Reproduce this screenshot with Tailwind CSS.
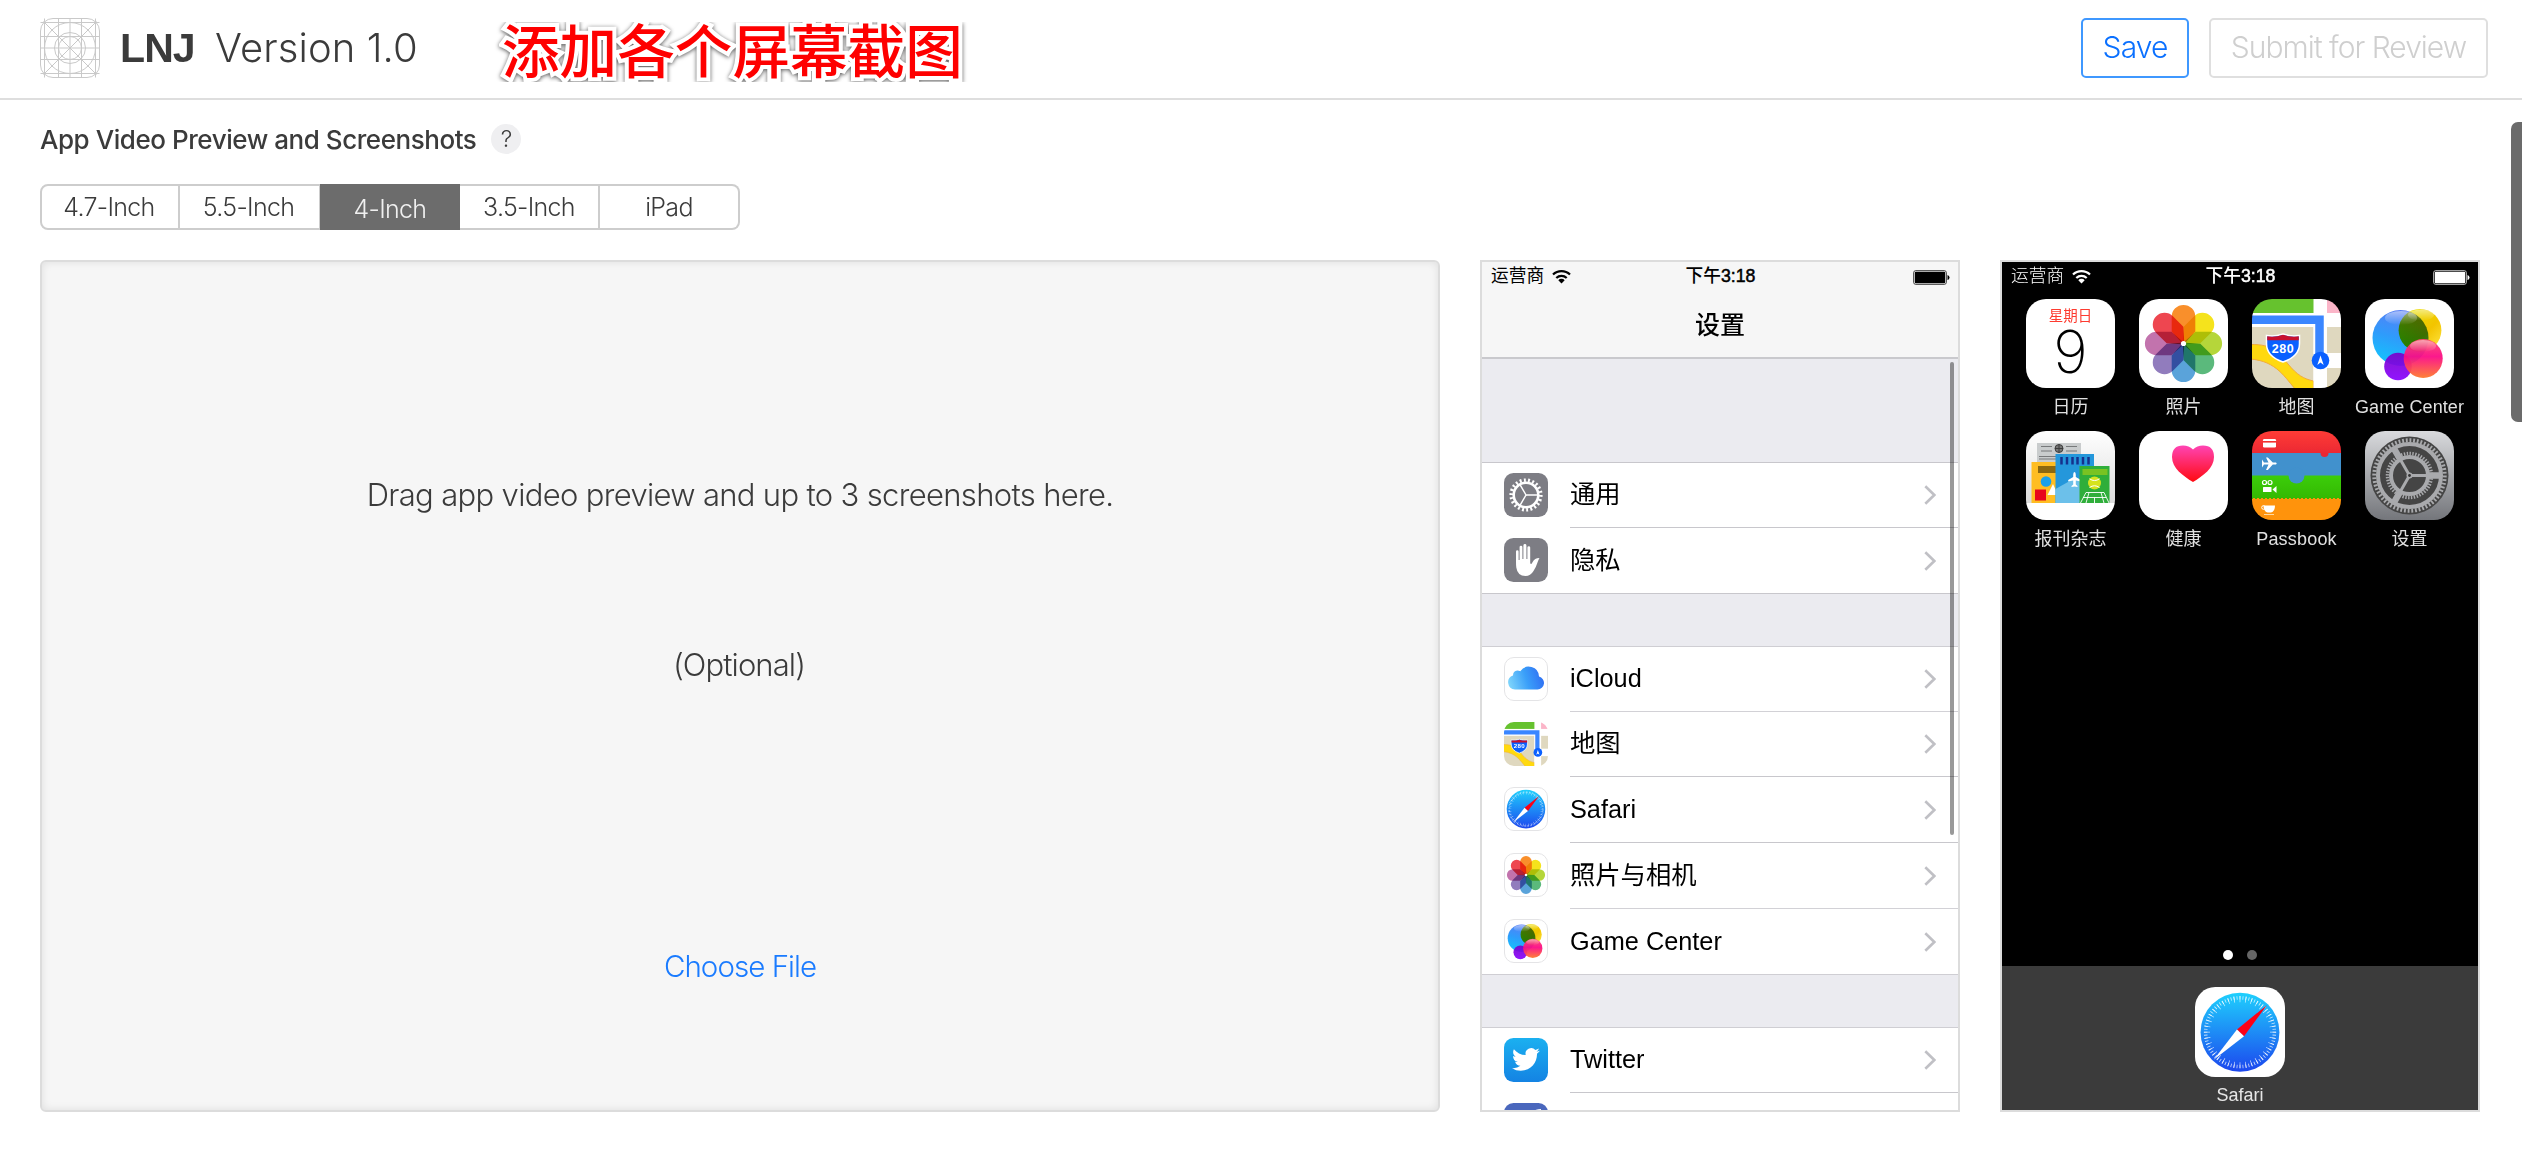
<!DOCTYPE html>
<html lang="en">
<head>
<meta charset="utf-8">
<title>LNJ Version 1.0</title>
<script src="https://cdn.jsdelivr.net/npm/@tailwindcss/browser@4"></script>
</head>
<body class="flex h-[1168px] flex-col overflow-hidden bg-white font-['Inter','Noto_Sans_CJK_SC',sans-serif] font-light text-[#3b3b3b]">

<!-- Shared artwork -->
<svg class="absolute h-0 w-0">
  <defs>
    <linearGradient id="gSafari" x1="0" y1="0" x2="0" y2="1"><stop offset="0" stop-color="#1fd0fd"/><stop offset="1" stop-color="#1c47ee"/></linearGradient>
    <linearGradient id="gBlue" x1="0.6" y1="0" x2="0.3" y2="1"><stop offset="0" stop-color="#5b7cf5"/><stop offset=".5" stop-color="#2f9bfb"/><stop offset="1" stop-color="#12c6fd"/></linearGradient>
    <linearGradient id="gYellow" x1="0" y1="0" x2="1" y2="1"><stop offset="0" stop-color="#e6e800"/><stop offset=".6" stop-color="#f3c400"/><stop offset="1" stop-color="#ffe94a"/></linearGradient>
    <linearGradient id="gPink" x1="0" y1="0" x2="0" y2="1"><stop offset="0" stop-color="#ff4a6a"/><stop offset=".45" stop-color="#fb0a86"/><stop offset="1" stop-color="#ff7a2a"/></linearGradient>
    <linearGradient id="gPurple" x1="0" y1="0" x2="0" y2="1"><stop offset="0" stop-color="#7a00c8"/><stop offset="1" stop-color="#8800ff"/></linearGradient>
    <linearGradient id="gShine" x1="0" y1="0" x2="0" y2="1"><stop offset="0" stop-color="#fff" stop-opacity=".5"/><stop offset="1" stop-color="#fff" stop-opacity="0"/></linearGradient>
    <linearGradient id="gHeart" x1="0" y1="0" x2="0" y2="1"><stop offset="0" stop-color="#ff44b4"/><stop offset="1" stop-color="#ff0a10"/></linearGradient>
    <linearGradient id="gGear" x1="0" y1="0" x2="0" y2="1"><stop offset="0" stop-color="#d9dadd"/><stop offset="1" stop-color="#74767b"/></linearGradient>
    <linearGradient id="gRed" x1="0" y1="0" x2="0" y2="1"><stop offset="0" stop-color="#ff3c36"/><stop offset="1" stop-color="#ea2733"/></linearGradient>
    <linearGradient id="gGreen" x1="0" y1="0" x2="0" y2="1"><stop offset="0" stop-color="#3ccd0a"/><stop offset="1" stop-color="#33b802"/></linearGradient>
    <linearGradient id="gCloud" x1="0" y1=".6" x2="1" y2=".4"><stop offset="0" stop-color="#7cd3fb"/><stop offset=".5" stop-color="#3a9ff9"/><stop offset="1" stop-color="#2f6df3"/></linearGradient>
    <linearGradient id="gTw" x1="0" y1="0" x2="0" y2="1"><stop offset="0" stop-color="#1bb0f0"/><stop offset="1" stop-color="#1483e3"/></linearGradient>
    <linearGradient id="gNews" x1="0" y1="0" x2="0" y2="1"><stop offset="0" stop-color="#ffffff"/><stop offset="1" stop-color="#dcdcdc"/></linearGradient>
    <clipPath id="tile"><rect width="89" height="89" rx="20"/></clipPath>
    <path id="petal" d="M32.700 17.700a11.800 11.800 0 0 1 23.600 0V32.500L46.500 43.500H42.500L32.700 32.500Z"/>

    <symbol id="photos" viewBox="0 0 89 89">
      <rect width="89" height="89" rx="20" fill="#fff"/>
      <g class="isolate">
        <g class="mix-blend-multiply"><use href="#petal" fill="#f98f2b"/></g>
        <g class="mix-blend-multiply"><use href="#petal" fill="#f5e31c" transform="rotate(45 44.500 44.500)"/></g>
        <g class="mix-blend-multiply"><use href="#petal" fill="#b5d63a" transform="rotate(90 44.500 44.500)"/></g>
        <g class="mix-blend-multiply"><use href="#petal" fill="#5bb97c" transform="rotate(135 44.500 44.500)"/></g>
        <g class="mix-blend-multiply"><use href="#petal" fill="#5aa3da" transform="rotate(180 44.500 44.500)"/></g>
        <g class="mix-blend-multiply"><use href="#petal" fill="#917cbd" transform="rotate(225 44.500 44.500)"/></g>
        <g class="mix-blend-multiply"><use href="#petal" fill="#c273ad" transform="rotate(270 44.500 44.500)"/></g>
        <g class="mix-blend-multiply"><use href="#petal" fill="#ee4650" transform="rotate(315 44.500 44.500)"/></g>
      </g>
      <circle cx="44.500" cy="44.500" r="2.600" fill="#fff"/>
    </symbol>

    <symbol id="map" viewBox="0 0 89 89">
      <g clip-path="url(#tile)">
        <rect width="89" height="89" fill="#fff"/>
        <rect width="61.500" height="14" fill="#66c22e"/>
        <rect x="75" width="14" height="14" fill="#fbb5c8"/>
        <rect y="28" width="61.500" height="61" fill="#dfd8bf"/>
        <rect x="75" y="28" width="14" height="26" fill="#dfd8bf"/>
        <rect x="75" y="69" width="14" height="20" fill="#dfd8bf"/>
        <path d="M-2 45.500C22 45 27 54 36 65C45 76 52 80 61.500 82V92H45C33 79 25 62-2 60Z" fill="#ffd90f" stroke="#f3ab3a" stroke-width="1"/>
        <path d="M75 88Q82 86 89 83V89H75Z" fill="#ffcf0f"/>
        <rect x="61.500" y="26" width="13.500" height="63" fill="#fff"/>
        <path d="M0 20.800H67.500V58" fill="none" stroke="#3a86ff" stroke-width="8.500"/>
        <circle cx="68.500" cy="61.500" r="8.800" fill="#0a60ff"/>
        <path d="M68.500 56.500l3.200 9.500-3.200-2.500-3.200 2.500z" fill="#fff"/>
        <path d="M14.500 36.500q8 1.500 16.500-1.500q8.500 3 16.500 1.500v8q0 13-16.500 18.500q-16.500-5.500-16.500-18.500z" fill="#0a60ff" stroke="#fff" stroke-width="1.500"/>
        <path d="M15.200 37.300q8 1.200 15.800-1.500q8 2.700 15.800 1.500v4h-31.600z" fill="#c8102e"/>
        <text x="31" y="53.500" text-anchor="middle" font-family="Liberation Sans" font-weight="700" font-size="12.500" letter-spacing=".6" fill="#fff">280</text>
      </g>
    </symbol>

    <symbol id="game" viewBox="0 0 89 89">
      <rect width="89" height="89" rx="20" fill="#fff"/>
      <g class="isolate">
        <circle cx="35.500" cy="39" r="28" fill="url(#gBlue)"/>
        <circle cx="55" cy="31.300" r="21.400" fill="url(#gYellow)" class="mix-blend-multiply"/>
        <circle cx="33" cy="67.500" r="13.800" fill="url(#gPurple)" opacity=".92"/>
        <circle cx="58.200" cy="59.500" r="19.500" fill="url(#gPink)" opacity=".94"/>
      </g>
      <ellipse cx="36" cy="19" rx="16" ry="7" fill="url(#gShine)"/>
      <ellipse cx="56" cy="16" rx="13" ry="5.500" fill="url(#gShine)"/>
      <ellipse cx="58" cy="47" rx="13" ry="6" fill="url(#gShine)"/>
    </symbol>

    <symbol id="safari" viewBox="0 0 89 89">
      <rect width="89" height="89" rx="20" fill="#fff"/>
      <circle cx="44.500" cy="44.700" r="39" fill="url(#gSafari)"/>
      <circle cx="44.500" cy="44.700" r="34" fill="none" stroke="#fff" stroke-width="3.500" stroke-opacity=".75" pathLength="720" stroke-dasharray="2.800 7.200" stroke-dashoffset="1.400"/>
      <circle cx="44.500" cy="44.700" r="32.700" fill="none" stroke="#fff" stroke-width="6" stroke-opacity=".75" pathLength="720" stroke-dasharray="2.600 17.400" stroke-dashoffset="1.300"/>
      <path d="M71 18L48.500 48.700 41.500 42Z" fill="#fd0016"/>
      <path d="M18.500 72L41.500 42 48.500 48.700Z" fill="#fff"/>
    </symbol>

    <symbol id="wifi" viewBox="0 0 19 15">
      <g fill="none" stroke="currentColor" stroke-width="2.200"><path d="M1 5.500a12.200 12.200 0 0 1 17 0"/><path d="M4.300 9a7.500 7.500 0 0 1 10.400 0"/></g>
      <path d="M9.500 14.500L6.300 11.200a4.500 4.500 0 0 1 6.400 0z" fill="currentColor"/>
    </symbol>
    <symbol id="battery" viewBox="0 0 37 15">
      <rect x=".6" y=".6" width="32.800" height="13.800" rx="2.200" fill="none" stroke="currentColor" stroke-width="1" opacity=".7"/>
      <rect x="1.800" y="1.800" width="30.400" height="11.400" rx="1" fill="currentColor"/>
      <path d="M34.500 5q2 .5 2 2.500t-2 2.500z" fill="currentColor"/>
    </symbol>
    <symbol id="chev" viewBox="0 0 12 20"><path d="M1.300 1.200L10.300 10 1.300 18.800" fill="none" stroke="#c0c0c5" stroke-width="2.600"/></symbol>
  </defs>
</svg>

<header class="flex h-[100px] shrink-0 items-start border-b-2 border-[#dedede] pl-10 pr-[34px] pt-[18px]">
  <svg class="h-[60px] w-[60px]" viewBox="0 0 60 60" fill="none" stroke="#c9c9c9" stroke-width="1">
    <rect x=".5" y=".5" width="59" height="59" rx="12.500"/>
    <path d="M4.500 .5v59M18.500 .5v59M30 .5v59M41.500 .5v59M55.500 .5v59M.5 4.500h59M.5 18.500h59M.5 30h59M.5 41.500h59M.5 55.500h59M3.500 3.500l53 53M56.500 3.500l-53 53"/>
    <circle cx="30" cy="30" r="25.500"/><circle cx="30" cy="30" r="15.500"/><circle cx="30" cy="30" r="11.500"/>
  </svg>
  <h1 class="ml-[20px] flex whitespace-nowrap pt-[6px] text-[40px] leading-[48px]"><span class="w-[95px] font-['Liberation_Sans'] text-[41px] font-bold tracking-[-0.9px]">LNJ</span><span class="w-[203px] tracking-[0.1px]">Version 1.0</span></h1>
  <div class="ml-[76px] mt-1 flex h-[60px] items-center px-2 [clip-path:inset(0)]"><span class="whitespace-nowrap text-[57.600px] font-medium leading-[60px] text-[#fe0000] drop-shadow-[0_1px_2px_rgba(0,0,0,0.65)] [-webkit-text-stroke:8px_white] [paint-order:stroke_fill]">添加各个屏幕截图</span></div>
  <div class="ml-auto flex gap-5">
    <button class="h-[60px] w-[108px] rounded-[5px] border-2 border-[#3f98ff] pb-0.5 text-[30px] leading-none tracking-[-0.9px] text-[#0a70ff]">Save</button>
    <button class="h-[60px] w-[279px] rounded-[5px] border-2 border-[#dfdfdf] pb-0.5 text-[30px] leading-none tracking-[-1px] text-[#cfcfcf]">Submit for Review</button>
  </div>
</header>

<main class="relative flex-1 pl-10 pt-6">
  <div class="flex h-[30px] items-center">
    <h2 class="whitespace-nowrap text-[26px] font-medium tracking-[-0.45px]">App Video Preview and Screenshots</h2>
    <span class="ml-[15px] flex h-[30px] w-[30px] items-center justify-center rounded-full bg-[#efeff1] text-[23px] leading-none">?</span>
  </div>

  <div class="mt-[30px] flex h-[46px] w-[700px] text-[25px] leading-[42px] tracking-[-0.7px]">
    <div class="w-[140px] rounded-l-[8px] border-2 border-[#cdcdcd] pr-0.5 text-center">4.7-Inch</div>
    <div class="w-[140px] border-y-2 border-r border-[#cdcdcd] pr-0.5 text-center">5.5-Inch</div>
    <div class="w-[140px] bg-[#6c6c6c] text-center leading-[50px] text-[#f0f0f0]">4-Inch</div>
    <div class="w-[140px] border-y-2 border-r-2 border-[#cdcdcd] text-center">3.5-Inch</div>
    <div class="w-[140px] rounded-r-[8px] border-y-2 border-r-2 border-[#cdcdcd] text-center">iPad</div>
  </div>

  <div class="mt-[30px] flex gap-10">
    <section class="flex h-[852px] w-[1400px] flex-col items-center rounded-[6px] border-2 border-[#dcdcdc] bg-[#f6f6f6] shadow-[inset_0_0_8px_rgba(0,0,0,0.1)]">
      <p class="mt-[213px] text-[31px] leading-[40px] tracking-[-0.67px]">Drag app video preview and up to 3 screenshots here.</p>
      <p class="mt-[130px] pr-0.5 text-[31px] leading-[40px] tracking-[-0.9px]">(Optional)</p>
      <p class="mt-[261px] text-[29.500px] leading-[40px] tracking-[-0.95px] text-[#1a7bff]">Choose File</p>
    </section>

    <!-- Settings screenshot -->
    <section class="relative flex h-[852px] w-[480px] flex-col overflow-hidden border-2 border-[#dcdcdc] bg-[#ebebf0] font-['Liberation_Sans','Noto_Sans_CJK_SC',sans-serif] font-normal text-black">
      <div class="h-[97px] shrink-0 border-b-2 border-[#c9c9cd] bg-[#f6f6f6]">
        <div class="grid h-[30px] grid-cols-3 items-center pl-[9px] pr-2 text-[17.700px] leading-none">
          <div class="flex items-center gap-[8px]">运营商<svg class="h-[15px] w-[19px]"><use href="#wifi"/></svg></div>
          <div class="text-center font-medium"><span>下午</span><span class="[-webkit-text-stroke:0.5px_black]">3:18</span></div>
          <svg class="h-[15px] w-[37px] justify-self-end"><use href="#battery"/></svg>
        </div>
        <div class="pt-[17px] text-center text-[25px] font-medium leading-[32px]">设置</div>
      </div>

      <div class="mt-[103px] shrink-0 border-y border-[#c8c7cc] bg-white">
        <div class="flex h-[65px] items-center pl-[22px]">
          <svg class="-mt-0.5 h-11 w-11" viewBox="0 0 44 44"><rect width="44" height="44" rx="9.500" fill="#7d7d84"/><g fill="none" stroke="#fff"><circle cx="22" cy="22" r="12.300" stroke-width="2.600"/><circle cx="22" cy="22" r="14.800" stroke-width="3.600" pathLength="220" stroke-dasharray="4.500 5.500"/><path d="M22 22H34M22 22L16 11.600M22 22L16 32.400" stroke-width="1.500"/></g></svg>
          <div class="ml-[22px] flex h-full flex-1 items-center border-b border-[#c8c7cc] pr-[22px] text-[25.300px]">通用<svg class="ml-auto h-5 w-3"><use href="#chev"/></svg></div>
        </div>
        <div class="flex h-[65px] items-center pl-[22px]">
          <svg class="-mt-0.5 h-11 w-11" viewBox="0 0 44 44"><rect width="44" height="44" rx="9.500" fill="#7d7d84"/><path d="M12 13.500q0-1.300 1.300-1.300t1.300 1.300V22h1V9q0-1.300 1.400-1.300T18.400 9V21h1V7.500q0-1.400 1.500-1.400t1.500 1.400V21h1V9.500q0-1.300 1.400-1.300t1.400 1.300V25.500l1.200.5 2.200-3.500q1.500-2 3.500-2.200l2.400-.3q-1.200 2-2 4.500-1.500 4.800-4 8.500Q26.500 38 21.500 38q-8 0-9.200-8.500-.3-2-.3-6z" fill="#fff"/></svg>
          <div class="ml-[22px] flex h-full flex-1 items-center pr-[22px] text-[25.300px]">隐私<svg class="ml-auto h-5 w-3"><use href="#chev"/></svg></div>
        </div>
      </div>

      <div class="mt-[52px] shrink-0 border-y border-[#cfced3] bg-white">
        <div class="flex h-[65px] items-center pl-[22px]">
          <svg class="-mt-0.5 h-11 w-11" viewBox="0 0 44 44"><rect x=".5" y=".5" width="43" height="43" rx="9.500" fill="#fff" stroke="#e4e4e6"/><path d="M11 32.500a7.200 7.200 0 0 1-2-14Q9 14 13.300 13.500q1.500 0 3 .8A10.200 10.200 0 0 1 35 19.500a6.600 6.600 0 0 1-1.500 13z" fill="url(#gCloud)"/></svg>
          <div class="ml-[22px] flex h-full flex-1 items-center border-b border-[#d2d1d6] pr-[22px] text-[25.300px]">iCloud<svg class="ml-auto h-5 w-3"><use href="#chev"/></svg></div>
        </div>
        <div class="flex h-[65px] items-center pl-[22px]">
          <svg class="-mt-0.5 h-11 w-11"><use href="#map"/></svg>
          <div class="ml-[22px] flex h-full flex-1 items-center border-b border-[#c8c7cc] pr-[22px] text-[25.300px]">地图<svg class="ml-auto h-5 w-3"><use href="#chev"/></svg></div>
        </div>
        <div class="flex h-[66px] items-center pl-[22px]">
          <svg class="-mt-0.5 h-11 w-11"><use href="#safari"/><rect x=".5" y=".5" width="43" height="43" rx="9.500" fill="none" stroke="#e4e4e6"/></svg>
          <div class="ml-[22px] flex h-full flex-1 items-center border-b border-[#c8c7cc] pr-[22px] text-[25.300px]">Safari<svg class="ml-auto h-5 w-3"><use href="#chev"/></svg></div>
        </div>
        <div class="flex h-[66px] items-center pl-[22px]">
          <svg class="-mt-0.5 h-11 w-11"><use href="#photos"/><rect x=".5" y=".5" width="43" height="43" rx="9.500" fill="none" stroke="#e4e4e6"/></svg>
          <div class="ml-[22px] flex h-full flex-1 items-center border-b border-[#d2d1d6] pr-[22px] text-[25.300px]">照片与相机<svg class="ml-auto h-5 w-3"><use href="#chev"/></svg></div>
        </div>
        <div class="flex h-[65px] items-center pl-[22px]">
          <svg class="-mt-0.5 h-11 w-11"><use href="#game"/><rect x=".5" y=".5" width="43" height="43" rx="9.500" fill="none" stroke="#e4e4e6"/></svg>
          <div class="ml-[22px] flex h-full flex-1 items-center pr-[22px] text-[25.300px]">Game Center<svg class="ml-auto h-5 w-3"><use href="#chev"/></svg></div>
        </div>
      </div>

      <div class="mt-[52px] flex-1 border-t border-[#cfced3] bg-white">
        <div class="flex h-[65px] items-center pl-[22px]">
          <svg class="-mt-0.5 h-11 w-11" viewBox="0 0 44 44"><rect width="44" height="44" rx="9.500" fill="url(#gTw)"/><path transform="translate(8 7.500) scale(1.160)" fill="#fff" d="M23.953 4.570a10 10 0 01-2.825.775 4.958 4.958 0 002.163-2.723c-.951.555-2.005.959-3.127 1.184a4.920 4.920 0 00-8.384 4.482C7.690 8.095 4.067 6.130 1.640 3.162a4.822 4.822 0 00-.666 2.475c0 1.710.870 3.213 2.188 4.096a4.904 4.904 0 01-2.228-.616v.060a4.923 4.923 0 003.946 4.827 4.996 4.996 0 01-2.212.085 4.936 4.936 0 004.604 3.417 9.867 9.867 0 01-6.102 2.105c-.390 0-.779-.023-1.170-.067a13.995 13.995 0 007.557 2.209c9.053 0 13.998-7.496 13.998-13.985 0-.210 0-.420-.015-.630A9.935 9.935 0 0024 4.590z"/></svg>
          <div class="ml-[22px] flex h-full flex-1 items-center border-b border-[#c8c7cc] pr-[22px] text-[25.300px]">Twitter<svg class="ml-auto h-5 w-3"><use href="#chev"/></svg></div>
        </div>
        <svg class="ml-[22px] mt-[10px] h-11 w-11" viewBox="0 0 44 44"><rect width="44" height="44" rx="9.500" fill="#4a67bd"/><path d="M28 44V17q0-9 9-9" fill="none" stroke="#fff" stroke-width="4"/></svg>
      </div>
      <div class="absolute right-1 top-[100px] h-[473px] w-1 rounded-full bg-black/40"></div>
    </section>

    <!-- Home screen screenshot -->
    <section class="flex h-[852px] w-[480px] flex-col overflow-hidden border-2 border-[#dcdcdc] bg-black font-['Liberation_Sans','Noto_Sans_CJK_SC',sans-serif] font-normal text-white">
      <div class="grid h-[30px] grid-cols-3 items-center pl-[9px] pr-2 text-[17.700px] leading-none">
        <div class="flex items-center gap-[8px] font-light">运营商<svg class="h-[15px] w-[19px]"><use href="#wifi"/></svg></div>
        <div class="text-center font-medium"><span>下午</span><span class="[-webkit-text-stroke:0.5px_white]">3:18</span></div>
        <svg class="h-[15px] w-[37px] justify-self-end"><use href="#battery"/></svg>
      </div>
      <div class="mt-[7px] grid grid-cols-[repeat(4,89px)] gap-x-6 gap-y-[10px] pl-6 text-[18px] leading-[24px] text-[#e0e0e0]">
        <div class="flex h-[122px] flex-col items-center gap-[7px] whitespace-nowrap">
          <div class="flex h-[89px] w-[89px] shrink-0 flex-col items-center rounded-[20px] bg-white pt-[9px]">
            <span class="text-[14.500px] leading-4 text-[#fd3b30]">星期日</span>
            <span class="font-['Inter'] text-[59px] font-extralight leading-[56px] text-black">9</span>
          </div><span>日历</span>
        </div>
        <div class="flex h-[122px] flex-col items-center gap-[7px] whitespace-nowrap"><svg class="h-[89px] w-[89px] shrink-0"><use href="#photos"/></svg><span>照片</span></div>
        <div class="flex h-[122px] flex-col items-center gap-[7px] whitespace-nowrap"><svg class="h-[89px] w-[89px] shrink-0"><use href="#map"/></svg><span>地图</span></div>
        <div class="flex h-[122px] flex-col items-center gap-[7px] whitespace-nowrap"><svg class="h-[89px] w-[89px] shrink-0"><use href="#game"/></svg><span class="tracking-[0.1px]">Game Center</span></div>

        <div class="flex h-[122px] flex-col items-center gap-[7px] whitespace-nowrap">
          <svg class="h-[89px] w-[89px] shrink-0" viewBox="0 0 89 89">
            <g clip-path="url(#tile)"><rect width="89" height="72" fill="url(#gNews)"/>
            <rect x="11" y="12" width="44" height="60" fill="#c9cccd"/>
            <path d="M15 15.500h11M15 20h11M40 15.500h11M40 20h11M13 25.500h30M13 28h30" stroke="#77797b" stroke-width="1"/>
            <circle cx="33" cy="17.500" r="4" fill="#777" stroke="#3c3c3c" stroke-width="1"/><path d="M29 17.500h8M33 13.500v8" stroke="#3c3c3c" stroke-width="1"/>
            <rect x="5.500" y="31" width="25" height="41" fill="#ffbd22"/><rect x="12" y="35" width="18" height="7" fill="#8c6810"/>
            <circle cx="20" cy="50.500" r="5.300" fill="#1aa0ea"/><rect x="9" y="58.500" width="11" height="11" fill="#e8061c"/>
            <path d="M27 53l5 11H21.500z" fill="#fff"/>
            <rect x="29.500" y="23" width="38.500" height="49" fill="#2497db"/><path d="M29.500 58L50 46.500l4 2V72H29.500z" fill="#6cc0ea"/>
            <path d="M35.500 26v7.500M41 26v7.500M46.500 26v7.500M51.500 26v7.500M57 26v7.500M62.500 26v7.500" stroke="#15308c" stroke-width="2.500"/>
            <path d="M48.500 41q1.300 0 1.300 3v2l5 3v1.500l-5-1v4l1.700 1.500v1l-3-.5-3 .5v-1l1.700-1.500v-4l-5 1v-1.500l5-3v-2q0-3 1.300-3z" fill="#fff"/>
            <rect x="53.500" y="35" width="30" height="37" fill="#2fae3a"/><rect x="56.500" y="38" width="25" height="6" fill="#79c322"/>
            <circle cx="68.500" cy="52" r="6.500" fill="#d5e31e"/><path d="M63.500 47.800q5 3.500 10 0M63.500 56.500q5-3.500 10 0" fill="none" stroke="#fff" stroke-width="1"/>
            <path d="M54.500 72L60 61.500H78L83 72M57 66.500h23M68.500 66.500V72M63 61.500l-3 10.500M75 61.500l3 10.500" fill="none" stroke="#fff" stroke-width=".9"/>
            <rect y="72" width="89" height="17" fill="#fff"/></g>
          </svg><span>报刊杂志</span>
        </div>
        <div class="flex h-[122px] flex-col items-center gap-[7px] whitespace-nowrap">
          <svg class="h-[89px] w-[89px] shrink-0" viewBox="0 0 89 89"><rect width="89" height="89" rx="20" fill="#fff"/><path d="M54 51C44 45 33 37 33 26Q33 14.500 44 14.500Q50 14.500 54 18.500Q58 14.500 64 14.500Q75 14.500 75 26C75 37 64 45 54 51Z" fill="url(#gHeart)"/></svg><span>健康</span>
        </div>
        <div class="flex h-[122px] flex-col items-center gap-[7px] whitespace-nowrap">
          <svg class="h-[89px] w-[89px] shrink-0" viewBox="0 0 89 89">
            <g clip-path="url(#tile)"><rect width="89" height="24" fill="url(#gRed)"/><rect y="22" width="89" height="24" fill="#4191cd"/><path d="M68.500 22a4 4 0 0 0 8 0z" fill="#ea2733"/>
            <rect y="44.500" width="89" height="24" fill="url(#gGreen)"/><circle cx="44.500" cy="44.500" r="8" fill="#4191cd"/>
            <rect y="68" width="89" height="21" fill="#ff930c"/><path d="M1 68H89" stroke="#ff930c" stroke-width="2" stroke-dasharray="2 2"/>
            <g fill="#fff"><rect x="11" y="8" width="13" height="8.500" rx="1.300"/><rect x="11" y="10" width="13" height="1.600" fill="#f3302f"/>
            <path d="M10 28.500l2 3h4.500L14 26.500h1.800l5 5H24q1.500 1 0 2h-3.200l-5 5.500H14l2.500-5.500H12l-2 3v-4z"/>
            <rect x="11" y="56" width="8.500" height="5" rx=".6"/><path d="M20.500 58.500l4-3.500v7z"/></g>
            <circle cx="12.500" cy="51.500" r="2" fill="none" stroke="#fff" stroke-width="1.200"/><circle cx="18" cy="51.500" r="2" fill="none" stroke="#fff" stroke-width="1.200"/>
            <path d="M11.500 74.500H23q0 6-4 7h-3.500q-4-1-4-7z" fill="#fff"/><circle cx="11.500" cy="76.500" r="1.800" fill="none" stroke="#fff" stroke-width="1"/><path d="M12 83.500h10" stroke="#ffd9a0" stroke-width="1.200"/></g>
          </svg><span class="tracking-[0.2px]">Passbook</span>
        </div>
        <div class="flex h-[122px] flex-col items-center gap-[7px] whitespace-nowrap">
          <svg class="h-[89px] w-[89px] shrink-0" viewBox="0 0 89 89">
            <rect width="89" height="89" rx="20" fill="url(#gGear)"/>
            <circle cx="44.500" cy="44.500" r="39" fill="#454545"/>
            <g fill="none" stroke="#a9aaad"><circle cx="44.500" cy="44.500" r="31.500" stroke-width="4"/><circle cx="44.500" cy="44.500" r="35.200" stroke-width="4" pathLength="300" stroke-dasharray="2.500 2.500"/>
            <circle cx="44.500" cy="44.500" r="18.500" stroke-width="4"/><circle cx="44.500" cy="44.500" r="22" stroke-width="3.500" pathLength="240" stroke-dasharray="2.500 2.500"/>
            <path d="M44.500 44.500H75M44.500 44.500L29.300 18.100M44.500 44.500L29.300 70.900" stroke-width="3"/>
            <path d="M64 44.500H75M34.700 27.500L29.300 18.100M34.700 61.500L29.300 70.900" stroke-width="6.500"/></g>
            <circle cx="44.500" cy="44.500" r="3" fill="#a9aaad"/><circle cx="44.500" cy="44.500" r="1.400" fill="#333"/>
          </svg><span>设置</span>
        </div>
      </div>
      <div class="mt-auto flex justify-center gap-[14px] pb-[6px]"><i class="h-[10px] w-[10px] rounded-full bg-white"></i><i class="h-[10px] w-[10px] rounded-full bg-[#666]"></i></div>
      <div class="flex h-[144px] shrink-0 flex-col items-center bg-[#3b3b3b] pt-[21px] text-[18px] leading-[24px] text-[#e6e6e6]">
        <svg class="h-[90px] w-[90px] shrink-0"><use href="#safari"/></svg>
        <span class="mt-[6px]">Safari</span>
      </div>
    </section>
  </div>

  <!-- Page scrollbar -->
  <div class="absolute right-0 top-[22px] h-[300px] w-[11px] rounded-l-[7px] bg-[#6b6b6b]"></div>
</main>
</body>
</html>
